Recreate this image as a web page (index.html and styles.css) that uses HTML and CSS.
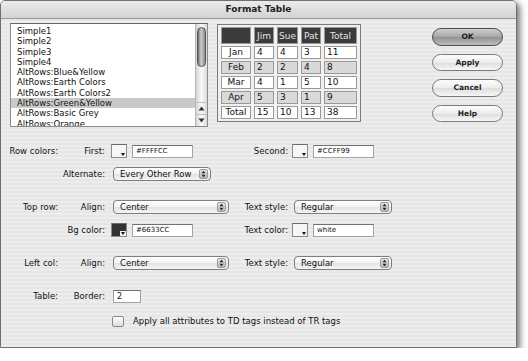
FILE: index.html
```html
<!DOCTYPE html>
<html lang="en">
<head>
    <meta charset="UTF-8">
    <title>Format Table</title>
    <link rel="stylesheet" href="styles.css">
</head>
<body>
    <div class="window">
        <div class="titlebar">Format Table</div>

        <div class="top">
            <div class="list">
                <ul class="items">
                    <li>Simple1</li>
                    <li>Simple2</li>
                    <li>Simple3</li>
                    <li>Simple4</li>
                    <li>AltRows:Blue&amp;Yellow</li>
                    <li>AltRows:Earth Colors</li>
                    <li>AltRows:Earth Colors2</li>
                    <li class="sel">AltRows:Green&amp;Yellow</li>
                    <li>AltRows:Basic Grey</li>
                    <li>AltRows:Orange</li>
                </ul>
                <div class="scroll">
                    <div class="thumb"></div>
                    <div class="track"></div>
                    <div class="arrow"><svg width="7" height="5" viewBox="0 0 7 5"><polygon points="0.5,4.5 3.5,0.5 6.5,4.5" fill="#333"/></svg></div>
                    <div class="arrow"><svg width="7" height="5" viewBox="0 0 7 5"><polygon points="0.5,0.5 3.5,4.5 6.5,0.5" fill="#333"/></svg></div>
                </div>
            </div>

            <table class="preview">
                <tr>
                    <th class="c0"></th>
                    <th class="cn">Jim</th>
                    <th class="cn">Sue</th>
                    <th class="cn">Pat</th>
                    <th class="ct">Total</th>
                </tr>
                <tr><td class="first">Jan</td><td>4</td><td>4</td><td>3</td><td>11</td></tr>
                <tr class="alt"><td class="first">Feb</td><td>2</td><td>2</td><td>4</td><td>8</td></tr>
                <tr><td class="first">Mar</td><td>4</td><td>1</td><td>5</td><td>10</td></tr>
                <tr class="alt"><td class="first">Apr</td><td>5</td><td>3</td><td>1</td><td>9</td></tr>
                <tr><td class="first">Total</td><td>15</td><td>10</td><td>13</td><td>38</td></tr>
            </table>

            <div class="buttons">
                <button class="btn default">OK</button>
                <button class="btn">Apply</button>
                <button class="btn">Cancel</button>
                <button class="btn">Help</button>
            </div>
        </div>

        <div class="form">
            <div class="row">
                <span class="lab1">Row colors:</span>
                <span class="lab2">First:</span>
                <div class="ctl">
                    <span class="swatch"></span>
                    <input class="field w60" type="text" value="#FFFFCC">
                </div>
                <span class="lab3">Second:</span>
                <div class="ctl2">
                    <span class="swatch"></span>
                    <input class="field w60" type="text" value="#CCFF99">
                </div>
            </div>

            <div class="row gap-sm">
                <span class="lab1"></span>
                <span class="lab2">Alternate:</span>
                <div class="ctl">
                    <div class="select w-alt"><span>Every Other Row</span><span class="stepper"><svg width="7" height="8" viewBox="0 0 7 8"><polygon points="1.5,3.2 3.5,0.8 5.5,3.2" fill="#222"/><polygon points="1.5,4.8 3.5,7.2 5.5,4.8" fill="#222"/></svg></span></div>
                </div>
            </div>

            <div class="row gap-lg">
                <span class="lab1">Top row:</span>
                <span class="lab2">Align:</span>
                <div class="ctl">
                    <div class="select w-wide"><span>Center</span><span class="stepper"><svg width="7" height="8" viewBox="0 0 7 8"><polygon points="1.5,3.2 3.5,0.8 5.5,3.2" fill="#222"/><polygon points="1.5,4.8 3.5,7.2 5.5,4.8" fill="#222"/></svg></span></div>
                </div>
                <span class="lab3">Text style:</span>
                <div class="ctl2">
                    <div class="select w-style"><span>Regular</span><span class="stepper"><svg width="7" height="8" viewBox="0 0 7 8"><polygon points="1.5,3.2 3.5,0.8 5.5,3.2" fill="#222"/><polygon points="1.5,4.8 3.5,7.2 5.5,4.8" fill="#222"/></svg></span></div>
                </div>
            </div>

            <div class="row gap-sm">
                <span class="lab1"></span>
                <span class="lab2">Bg color:</span>
                <div class="ctl">
                    <span class="swatch dark"></span>
                    <input class="field w60" type="text" value="#6633CC">
                </div>
                <span class="lab3">Text color:</span>
                <div class="ctl2">
                    <span class="swatch"></span>
                    <input class="field w60" type="text" value="white">
                </div>
            </div>

            <div class="row gap-lg">
                <span class="lab1">Left col:</span>
                <span class="lab2">Align:</span>
                <div class="ctl">
                    <div class="select w-wide"><span>Center</span><span class="stepper"><svg width="7" height="8" viewBox="0 0 7 8"><polygon points="1.5,3.2 3.5,0.8 5.5,3.2" fill="#222"/><polygon points="1.5,4.8 3.5,7.2 5.5,4.8" fill="#222"/></svg></span></div>
                </div>
                <span class="lab3">Text style:</span>
                <div class="ctl2">
                    <div class="select w-style"><span>Regular</span><span class="stepper"><svg width="7" height="8" viewBox="0 0 7 8"><polygon points="1.5,3.2 3.5,0.8 5.5,3.2" fill="#222"/><polygon points="1.5,4.8 3.5,7.2 5.5,4.8" fill="#222"/></svg></span></div>
                </div>
            </div>

            <div class="row gap-lg">
                <span class="lab1">Table:</span>
                <span class="lab2">Border:</span>
                <div class="ctl">
                    <input class="field w28" type="text" value="2">
                </div>
            </div>

            <div class="row gap-md">
                <span class="lab1"></span>
                <span class="lab2"></span>
                <div class="ctl wide">
                    <span class="check"></span>
                    <span class="check-label">Apply all attributes to TD tags instead of TR tags</span>
                </div>
            </div>
        </div>
    </div>
</body>
</html>
```

FILE: styles.css
```css
body {
    margin: 0;
    background: #fff;
    font-family: "DejaVu Sans", sans-serif;
    font-size: 8.5px;
    color: #111;
}
.window {
    width: 515px;
    height: 346px;
    border: 1px solid #707070;
    border-radius: 5px 5px 0 0;
    background: repeating-linear-gradient(#ededed 0 2px, #e6e6e6 2px 4px);
    box-shadow: 3px 3px 6px rgba(0, 0, 0, 0.55);
    overflow: hidden;
}
.titlebar {
    height: 17px;
    line-height: 17px;
    text-align: center;
    font-weight: bold;
    font-size: 9px;
    color: #222;
    background: linear-gradient(#ebebeb, #d3d3d3);
    border-bottom: 1px solid #999;
}

/* top area: styles list, preview, buttons */
.top {
    display: flex;
    align-items: flex-start;
    padding: 4px 0 0 9px;
}
.list {
    width: 196px;
    height: 102px;
    border: 1px solid #8c8c8c;
    border-top-color: #666;
    background: #fff;
    display: flex;
}
.items {
    flex: 1;
    margin: 0;
    padding: 2px 0 0;
    list-style: none;
    overflow: hidden;
}
.items li {
    height: 10.3px;
    line-height: 10.3px;
    padding-left: 6px;
    white-space: nowrap;
}
.items li.sel {
    background: #c9c9c9;
}
.scroll {
    width: 11px;
    border-left: 1px solid #b5b5b5;
    display: flex;
    flex-direction: column;
    background: linear-gradient(to right, #d6d6d6, #fafafa 50%, #dadada);
}
.thumb {
    height: 40px;
    margin: 3px 1px 0;
    box-sizing: border-box;
    border: 1px solid #555;
    border-radius: 5px;
    background: linear-gradient(to right, #6f6f6f, #cfcfcf 45%, #8a8a8a);
}
.track {
    flex: 1;
}
.arrow {
    height: 11px;
    display: flex;
    align-items: center;
    justify-content: center;
    border-top: 1px solid #c2c2c2;
}

.preview {
    margin: 1px 0 0 9px;
    border: 1px solid #7a7a7a;
    border-spacing: 3px 2px;
    background: #f0f0f0;
    font-size: 9px;
}
.preview th,
.preview td {
    padding: 0 1px;
    border: 1px solid #999;
    white-space: nowrap;
}
.preview th {
    height: 15px;
    background: #3b3b3b;
    color: #e4e4e4;
    font-weight: normal;
    text-align: center;
}
.preview td {
    height: 11px;
    line-height: 11px;
    background: #fff;
    padding-left: 2px;
}
.preview tr.alt td {
    background: #d9d9d9;
}
.preview td.first {
    text-align: center;
    padding-left: 1px;
}
.c0 { width: 26px; }
.cn { width: 16px; }
.ct { width: 29px; }

.buttons {
    margin: 5px 13px 0 auto;
    display: flex;
    flex-direction: column;
    gap: 8px;
}
.btn {
    width: 71px;
    height: 17.5px;
    box-sizing: border-box;
    padding: 0;
    border: 1px solid #7a7a7a;
    border-radius: 9px;
    background: linear-gradient(#fdfdfd, #ececec 50%, #dcdcdc 51%, #f7f7f7);
    font-family: "DejaVu Sans", sans-serif;
    font-weight: bold;
    font-size: 7.5px;
    color: #222;
}
.btn.default {
    border-color: #4e4e4e;
    background: linear-gradient(#cfcfcf, #a5a5a5 50%, #919191 51%, #bdbdbd);
}

/* form rows */
.form {
    padding-top: 17px;
}
.row {
    display: flex;
    align-items: center;
    height: 14px;
}
.gap-sm { margin-top: 9px; }
.gap-md { margin-top: 11px; }
.gap-lg { margin-top: 19px; }
.lab1 {
    width: 57px;
    text-align: right;
}
.lab2 {
    width: 47px;
    text-align: right;
}
.ctl {
    width: 130px;
    padding-left: 6px;
    display: flex;
    align-items: center;
}
.ctl.wide {
    width: auto;
}
.lab3 {
    width: 47px;
    text-align: right;
}
.ctl2 {
    padding-left: 4px;
    display: flex;
    align-items: center;
}

.swatch {
    width: 16px;
    height: 14px;
    box-sizing: border-box;
    border: 1px solid #8a8a8a;
    border-top-color: #6a6a6a;
    background: #f6f6f6;
    position: relative;
}
.swatch.dark {
    background: #333;
}
.swatch::before {
    content: "";
    position: absolute;
    right: 0;
    bottom: 0;
    width: 6px;
    height: 5px;
    background: #f2f2f2;
}
.swatch::after {
    content: "";
    position: absolute;
    right: 1px;
    bottom: 1px;
    border-left: 2px solid transparent;
    border-right: 2px solid transparent;
    border-top: 3px solid #111;
}

.field {
    height: 13px;
    box-sizing: border-box;
    margin: 0 0 0 5px;
    padding: 0 3px;
    border: 1px solid #a3a3a3;
    border-top-color: #707070;
    background: #fff;
    font-family: "DejaVu Sans", sans-serif;
    font-size: 7px;
    color: #111;
    outline: none;
}
.w60 { width: 61px; }
.w28 {
    width: 28px;
    margin-left: 2px;
    font-size: 8px;
}

.select {
    height: 14px;
    box-sizing: border-box;
    margin-left: 2px;
    padding: 0 2px 0 6px;
    border: 1px solid #7d7d7d;
    border-radius: 4px;
    background: linear-gradient(#ffffff, #f2f2f2 50%, #e3e3e3 51%, #f5f5f5);
    display: flex;
    align-items: center;
    justify-content: space-between;
}
.w-alt { width: 98px; }
.w-wide { width: 116px; }
.w-style { width: 98px; }
.stepper {
    width: 9px;
    height: 10px;
    box-sizing: border-box;
    border: 1px solid #9a9a9a;
    border-radius: 2px;
    background: linear-gradient(#e6e6e6, #b8b8b8);
    display: flex;
    align-items: center;
    justify-content: center;
}

.check {
    width: 12px;
    height: 11px;
    box-sizing: border-box;
    margin-left: 1px;
    border: 1px solid #8a8a8a;
    border-radius: 2px;
    background: linear-gradient(#fdfdfd, #dedede);
}
.check-label {
    margin-left: 9px;
    white-space: nowrap;
}
```
